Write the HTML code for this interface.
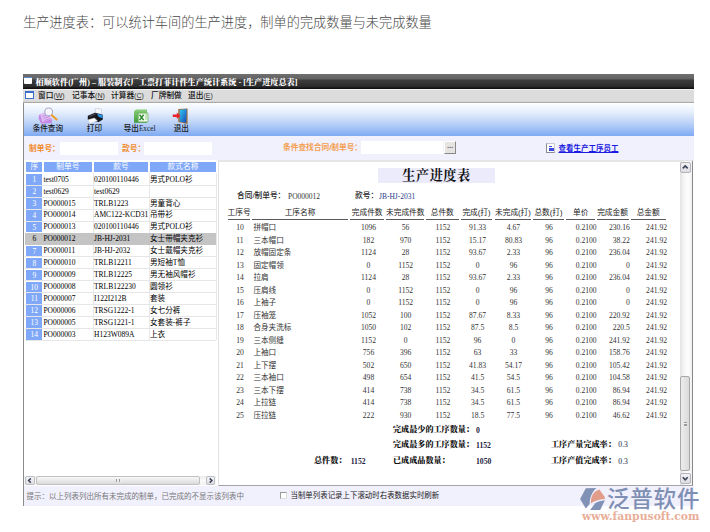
<!DOCTYPE html>
<html><head><meta charset="utf-8"><title>生产进度表</title>
<style>
html,body{margin:0;padding:0;background:#fff;}
body{width:710px;height:532px;position:relative;overflow:hidden;font-family:"Liberation Sans","Noto Sans CJK SC",sans-serif;}
div,span{position:absolute;white-space:nowrap;box-sizing:border-box;}
.h1{left:23px;top:13.7px;font-size:13.2px;line-height:18px;color:#484848;font-weight:300;letter-spacing:0px;text-spacing-trim:space-all;}
.tb{left:23px;top:74px;width:671px;height:15px;background:linear-gradient(#707070 0,#626262 33%,#3e3e3e 40%,#2a2a2a 86%,#111 93%,#111 100%);}
.tbt{letter-spacing:0.04px;left:12.6px;top:0.5px;font-size:8.1px;line-height:15px;color:#fff;font-weight:900;font-family:"Liberation Serif","Noto Serif CJK SC",serif;}
.mb{left:23px;top:89px;width:671px;height:14.5px;background:linear-gradient(#f4f4f4 0,#f4f4f4 1px,#dcdcdc 1.5px,#dcdcdc 11.7px,#eee 12.2px,#aaa 13px,#aaa 13.6px,#fff 14px);}
.mbt{top:0.5px;font-weight:500;font-size:7.7px;line-height:12px;color:#111;}
.mbt i{font-style:normal;font-size:7px;color:#333}
.tool{left:24px;top:103.5px;width:670px;height:32.5px;background:linear-gradient(#fbfdff 0,#e6effc 25%,#c2d6f8 55%,#8fb5f4 90%,#7ea9f2 100%);}
.tl{font-family:"Liberation Serif","Noto Sans CJK SC",serif;font-size:7.6px;line-height:10px;color:#181818;font-weight:500;top:20.5px;text-align:center;width:50px;}
.flt{left:24px;top:135.7px;width:670px;height:25px;background:#f1f0fd;}
.or{color:#f28a28;font-weight:bold;font-size:7.7px;line-height:12px;}
.inp{background:#fff;height:13.2px;}
.lp{left:24px;top:160px;width:192px;height:325px;background:#fff;}
.lh{background:#80a8f8;color:#fff;font-size:7.7px;line-height:11px;text-align:center;height:10.6px;line-height:10.6px;top:161.5px;}
.lr{font-family:"Liberation Serif","Noto Sans CJK SC",serif;font-size:7.5px;line-height:11px;color:#000;height:11px;}
.ln{left:26.3px;width:16px;background:#80a8f8;color:#fff;text-align:center;height:10.4px !important;margin-top:0.7px;line-height:11.6px !important;overflow:hidden;}
.cjk{font-family:"Liberation Serif","Noto Sans CJK SC",sans-serif;font-size:7.6px !important;}
.rp{left:218.3px;top:160.3px;width:474.7px;height:325.4px;background:#fff;border:1px solid #a4a4a4;border-top:2.2px solid #e6e6e6;border-left:1.9px solid #e2e2e2;border-right:1.5px solid #888}
.rh{font-size:7.7px;line-height:10.4px;color:#222;text-align:center;border-bottom:1.4px solid #5a5a5a;height:11.4px;top:208.2px;}
.rc{font-family:"Liberation Serif","Noto Sans CJK SC",serif;font-size:7.6px;line-height:12px;color:#333;height:12px;}
.c{text-align:center;}
.r{text-align:right;}
.sb{font-family:"Liberation Serif","Noto Serif CJK SC",serif;font-weight:900;font-size:8.1px;line-height:12px;color:#111;margin-top:1.2px}
.sbn{font-family:"Liberation Serif",serif;font-weight:bold;font-size:7.7px;line-height:12px;color:#1c1c40;margin-top:1.2px}
.status{left:23px;top:485.5px;width:671px;height:20px;background:#f1f0fd;}
</style></head><body>

<div class="h1">生产进度表：可以统计车间的生产进度，制单的完成数量与未完成数量</div>
<div class="tb"><div style="left:1.2px;top:3.4px;width:8.2px;height:7px;background:#fff;border-top:1.6px solid #5a86d8;border-radius:1px"></div><div class="tbt">栢顺软件(广州) – 服装制衣厂工票打菲计件生产统计系统 - [生产进度总表]</div></div>
<div class="mb"><div style="left:2px;top:2px;width:9px;height:8px;background:#fff;border:1px solid #3a6fd0;border-top-width:2px"></div>
<div class="mbt" style="left:15px">窗口<i>(<u>W</u>)</i></div>
<div class="mbt" style="left:49px">记事本<i>(<u>N</u>)</i></div>
<div class="mbt" style="left:88px">计算器<i>(<u>C</u>)</i></div>
<div class="mbt" style="left:128px">厂牌制做</div>
<div class="mbt" style="left:165px">退出<i>(<u>E</u>)</i></div>
</div>
<div class="tool">
<div class="tl" style="left:-1.2px">条件查询</div>
<div class="tl" style="left:45.4px">打印</div>
<div class="tl" style="left:90.6px">导出<span style="position:static;font-size:7.3px;font-weight:normal;color:#222">Excel</span></div>
<div class="tl" style="left:132.3px">退出</div>
<svg style="position:absolute;left:0;top:0" width="180" height="32.5" viewBox="24 103.5 180 32.5">
<defs>
<linearGradient id="gd" x1="0" y1="0" x2="1" y2="1"><stop offset="0" stop-color="#38c8f0"/><stop offset="1" stop-color="#1048b8"/></linearGradient>
<linearGradient id="gx" x1="0" y1="0" x2="0" y2="1"><stop offset="0" stop-color="#8ccf7a"/><stop offset="1" stop-color="#3f9a3c"/></linearGradient>
</defs>
<g>
<path d="M39 114.5 L47.5 111.5 L52.2 119.5 L51.5 122.8 L41 123 L38.6 118 Z" fill="#c48ae6"/>
<path d="M40.2 113.6 L48 111 L51.6 118.4 L42.4 121.4 Z" fill="#e2bdf4"/>
<path d="M42.5 116 L48.5 114 M43.5 118 L49.5 116 M44.4 120 L50.4 118" stroke="#b27ad8" stroke-width="0.7"/>
<circle cx="48.7" cy="111.4" r="3.9" fill="#f6f6fc" fill-opacity="0.92" stroke="#a8a8c4" stroke-width="1.1"/>
<path d="M51.8 114.8 L56.6 119" stroke="#f09a20" stroke-width="2" stroke-linecap="round"/>
</g>
<g>
<path d="M95.6 107.9 L101.6 108.6 L101.3 113.4 L95 112.6 Z" fill="#f6f8fc" stroke="#b4bcc8" stroke-width="0.5"/>
<path d="M87.8 115.2 L95 112.2 L102.8 114.2 L102.8 119 L98.8 121.6 L87.8 119.2 Z" fill="#17171d"/>
<path d="M96.9 113.3 L102.6 114.6 L102.6 117.7 L98.8 116.5 Z" fill="#2a94e4"/>
<path d="M88.6 115.4 L95 112.9 L96.6 113.6 L90 116.4 Z" fill="#44444e"/>
<path d="M88 119.2 L94.4 117.5 L97.5 120.3 L89.9 122.9 Z" fill="#fbfbfb" stroke="#c4c4cc" stroke-width="0.4"/>
</g>
<g>
<path d="M134 122.2 L134 112 Q134 109 137.5 109 L147 109 L147 122.2 Z" fill="url(#gx)"/>
<rect x="138.2" y="112.6" width="9.8" height="8.8" fill="#f4faef" stroke="#5aa848" stroke-width="0.6"/>
<path d="M139.6 114.2 L143.6 119.6 M143.6 114.2 L139.6 119.6" stroke="#2e8a30" stroke-width="1.5"/>
<path d="M145 114.4 L147.6 114.4 M145 116.4 L147.6 116.4 M145 118.4 L147.6 118.4" stroke="#7fc46e" stroke-width="0.8"/>
</g>
<g>
<path d="M178.2 108.4 L187.6 107.9 L187.6 123.4 L178.2 121.6 Z" fill="#a8703a"/>
<path d="M179.6 109.2 L186.8 108.6 L186.2 122.6 L179.6 121 Z" fill="url(#gd)"/>
<path d="M172.8 113.9 L176.8 113.9 L176.8 112 L180.6 115.2 L176.8 118.4 L176.8 116.5 L172.8 116.5 Z" fill="#e8202c"/>
</g>
</svg>
</div>
<div class="flt">
<div class="or" style="left:5px;top:7.2px">制单号：</div><div class="inp" style="left:36px;top:6.4px;width:58px"></div>
<div class="or" style="left:98px;top:7.2px">款号：</div><div class="inp" style="left:119.6px;top:6.4px;width:68.4px"></div>
<div class="or" style="left:259px;top:6.6px;color:#f4a050">条件查找合同/制单号：</div><div class="inp" style="left:337px;top:5.6px;width:82.2px"></div>
<div style="left:420px;top:5px;width:12px;height:13.5px;background:#e6e4e0;border:1px solid #fff;border-right-color:#888;border-bottom-color:#888;font-size:8px;line-height:8.5px;font-weight:bold;text-align:center;color:#667;letter-spacing:-0.3px">...</div>
<div style="left:522px;top:7.8px;width:9.4px;height:10px;background:#fff;border:1px solid #c8c8d0;border-left:1.5px solid #8a8a90;border-bottom:1.5px solid #8a8a90"></div><div style="left:524.6px;top:10.6px;width:3px;height:1px;background:#3a4ae0"></div><div style="left:524.6px;top:12.6px;width:5px;height:3.2px;background:#3a4ae0"></div>
<div style="left:534.5px;top:7.3px;font-size:7.5px;line-height:12px;color:#1a1ae0;font-weight:bold;text-decoration:underline;text-underline-offset:1px">查看生产工序员工</div>
</div>
<div class="lp"></div>
<div class="lh" style="left:26.3px;width:16.0px">序</div>
<div class="lh" style="left:43.7px;width:48.3px">制单号</div>
<div class="lh" style="left:94.0px;width:54.0px">款号</div>
<div class="lh" style="left:150.0px;width:66.0px">款式名称</div>
<div style="left:92.6px;top:173px;width:1px;height:167px;background:#e8e8e8"></div>
<div style="left:148.8px;top:173px;width:1px;height:167px;background:#e8e8e8"></div>
<div style="left:215.6px;top:173px;width:1px;height:167px;background:#e8e8e8"></div>
<div style="left:25px;top:184.90px;width:191px;height:1px;background:#e6e6e6"></div>
<div class="lr ln" style="top:173.70px">1</div>
<div class="lr" style="left:43.4px;top:173.70px">test0705</div>
<div class="lr" style="left:94px;top:173.70px">020100110446</div>
<div class="lr cjk" style="left:150px;top:173.70px">男式POLO衫</div>
<div style="left:25px;top:196.81px;width:191px;height:1px;background:#e6e6e6"></div>
<div class="lr ln" style="top:185.61px">2</div>
<div class="lr" style="left:43.4px;top:185.61px">test0629</div>
<div class="lr" style="left:94px;top:185.61px">test0629</div>
<div class="lr cjk" style="left:150px;top:185.61px"></div>
<div style="left:25px;top:208.72px;width:191px;height:1px;background:#e6e6e6"></div>
<div class="lr ln" style="top:197.52px">3</div>
<div class="lr" style="left:43.4px;top:197.52px">PO000015</div>
<div class="lr" style="left:94px;top:197.52px">TRLB1223</div>
<div class="lr cjk" style="left:150px;top:197.52px">男童背心</div>
<div style="left:25px;top:220.63px;width:191px;height:1px;background:#e6e6e6"></div>
<div class="lr ln" style="top:209.43px">4</div>
<div class="lr" style="left:43.4px;top:209.43px">PO000014</div>
<div class="lr" style="left:94px;top:209.43px">AMC122-KCD31</div>
<div class="lr cjk" style="left:150px;top:209.43px">吊带衫</div>
<div style="left:25px;top:232.54px;width:191px;height:1px;background:#e6e6e6"></div>
<div class="lr ln" style="top:221.34px">5</div>
<div class="lr" style="left:43.4px;top:221.34px">PO000013</div>
<div class="lr" style="left:94px;top:221.34px">020100110446</div>
<div class="lr cjk" style="left:150px;top:221.34px">男式POLO衫</div>
<div style="left:25px;top:233.25px;width:191px;height:11.4px;background:#c4c4c4"></div>
<div class="lr c" style="left:26.3px;width:16px;top:233.25px">6</div>
<div class="lr" style="left:43.4px;top:233.25px">PO000012</div>
<div class="lr" style="left:94px;top:233.25px">JB-HJ-2031</div>
<div class="lr cjk" style="left:150px;top:233.25px">女士带帽夹克衫</div>
<div style="left:25px;top:256.36px;width:191px;height:1px;background:#e6e6e6"></div>
<div class="lr ln" style="top:245.16px">7</div>
<div class="lr" style="left:43.4px;top:245.16px">PO000011</div>
<div class="lr" style="left:94px;top:245.16px">JB-HJ-2032</div>
<div class="lr cjk" style="left:150px;top:245.16px">女士戴帽夹克衫</div>
<div style="left:25px;top:268.27px;width:191px;height:1px;background:#e6e6e6"></div>
<div class="lr ln" style="top:257.07px">8</div>
<div class="lr" style="left:43.4px;top:257.07px">PO000010</div>
<div class="lr" style="left:94px;top:257.07px">TRLB12211</div>
<div class="lr cjk" style="left:150px;top:257.07px">男短袖T恤</div>
<div style="left:25px;top:280.18px;width:191px;height:1px;background:#e6e6e6"></div>
<div class="lr ln" style="top:268.98px">9</div>
<div class="lr" style="left:43.4px;top:268.98px">PO000009</div>
<div class="lr" style="left:94px;top:268.98px">TRLB12225</div>
<div class="lr cjk" style="left:150px;top:268.98px">男无袖风帽衫</div>
<div style="left:25px;top:292.09px;width:191px;height:1px;background:#e6e6e6"></div>
<div class="lr ln" style="top:280.89px">10</div>
<div class="lr" style="left:43.4px;top:280.89px">PO000008</div>
<div class="lr" style="left:94px;top:280.89px">TRLB122230</div>
<div class="lr cjk" style="left:150px;top:280.89px">圆领衫</div>
<div style="left:25px;top:304.00px;width:191px;height:1px;background:#e6e6e6"></div>
<div class="lr ln" style="top:292.80px">11</div>
<div class="lr" style="left:43.4px;top:292.80px">PO000007</div>
<div class="lr" style="left:94px;top:292.80px">I122I212B</div>
<div class="lr cjk" style="left:150px;top:292.80px">套装</div>
<div style="left:25px;top:315.91px;width:191px;height:1px;background:#e6e6e6"></div>
<div class="lr ln" style="top:304.71px">12</div>
<div class="lr" style="left:43.4px;top:304.71px">PO000006</div>
<div class="lr" style="left:94px;top:304.71px">TRSG1222-1</div>
<div class="lr cjk" style="left:150px;top:304.71px">女七分裤</div>
<div style="left:25px;top:327.82px;width:191px;height:1px;background:#e6e6e6"></div>
<div class="lr ln" style="top:316.62px">13</div>
<div class="lr" style="left:43.4px;top:316.62px">PO000005</div>
<div class="lr" style="left:94px;top:316.62px">TRSG1221-1</div>
<div class="lr cjk" style="left:150px;top:316.62px">女套装-裤子</div>
<div style="left:25px;top:339.73px;width:191px;height:1px;background:#e6e6e6"></div>
<div class="lr ln" style="top:328.53px">14</div>
<div class="lr" style="left:43.4px;top:328.53px">PO000003</div>
<div class="lr" style="left:94px;top:328.53px">H123W089A</div>
<div class="lr cjk" style="left:150px;top:328.53px">上衣</div>
<div style="left:24px;top:475.8px;width:192px;height:9.7px;background:linear-gradient(#ececec,#fafafa 50%,#f2f2f2)"></div>
<div style="left:25.4px;top:476.2px;width:9.6px;height:9px;background:linear-gradient(#f6f6f8,#dedee2);border:1px solid #bcbcc4;border-radius:2px"></div>
<svg style="position:absolute;left:25.4px;top:476.2px" width="9.6" height="9" viewBox="0 0 9.6 9"><path d="M5.8 2.4 L3.6 4.5 L5.8 6.6" fill="none" stroke="#3a4458" stroke-width="1.5"/></svg>
<div style="left:36px;top:476.2px;width:164px;height:9px;background:linear-gradient(#f8f8f8,#dadada);border:1px solid #c0c0c0;border-radius:2px"></div>
<div style="left:115.5px;top:479px;width:5px;height:3.4px;background:repeating-linear-gradient(90deg,#999 0,#999 0.8px,#eee 0.8px,#eee 1.7px)"></div>
<div style="left:206px;top:476.2px;width:9.4px;height:9px;background:linear-gradient(#f6f6f8,#dedee2);border:1px solid #bcbcc4;border-radius:2px"></div>
<svg style="position:absolute;left:206px;top:476.2px" width="9.4" height="9" viewBox="0 0 9.4 9"><path d="M3.7 2.4 L5.9 4.5 L3.7 6.6" fill="none" stroke="#3a4458" stroke-width="1.5"/></svg>
<div class="rp"></div>
<div style="left:378px;top:168px;width:116.6px;height:14.8px;background:#ebebfb"></div>
<div style="left:378.5px;top:167.2px;width:116px;height:18px;text-align:center;font-family:'Liberation Serif','Noto Serif CJK SC',serif;font-weight:700;font-size:13.1px;line-height:18px;color:#111;letter-spacing:0.6px">生产进度表</div>
<div style="left:237px;top:189.8px;font-size:7.7px;line-height:12px;color:#222;font-weight:500">合同/制单号：</div>
<div style="left:288px;top:190.8px;font-size:7.5px;line-height:12px;color:#333;font-family:'Liberation Serif',serif">PO000012</div>
<div style="left:355px;top:189.8px;font-size:7.7px;line-height:12px;color:#222;font-weight:500">款号：</div>
<div style="left:379px;top:190.8px;font-size:7.5px;line-height:12px;color:#2a3a8a;font-family:'Liberation Serif',serif">JB-HJ-2031</div>
<div class="rh" style="left:227.6px;width:22.8px">工序号</div>
<div class="rh" style="left:251.7px;width:96.7px">工序名称</div>
<div class="rh" style="left:350.4px;width:33.6px">完成件数</div>
<div class="rh" style="left:386.0px;width:37.6px">未完成件数</div>
<div class="rh" style="left:425.7px;width:33.1px">总件数</div>
<div class="rh" style="left:461.0px;width:31.0px">完成(打)</div>
<div class="rh" style="left:495.0px;width:35.5px">未完成(打)</div>
<div class="rh" style="left:532.6px;width:31.8px">总数(打)</div>
<div class="rh" style="left:566.4px;width:28.6px">单价</div>
<div class="rh" style="left:596.5px;width:32.1px">完成金额</div>
<div class="rh" style="left:630.6px;width:35.2px">总金额</div>
<div class="rc c" style="left:228.6px;width:22.8px;top:222.00px">10</div>
<div class="rc cjk" style="left:253.4px;top:222.00px">拼帽口</div>
<div class="rc c" style="left:351.7px;width:33.6px;top:222.00px">1096</div>
<div class="rc c" style="left:386.8px;width:37.6px;top:222.00px">56</div>
<div class="rc c" style="left:426.3px;width:33.1px;top:222.00px">1152</div>
<div class="rc c" style="left:462.1px;width:31.0px;top:222.00px">91.33</div>
<div class="rc c" style="left:495.7px;width:35.5px;top:222.00px">4.67</div>
<div class="rc c" style="left:533.2px;width:31.8px;top:222.00px">96</div>
<div class="rc r" style="left:567.0px;width:29.6px;top:222.00px">0.2100</div>
<div class="rc r" style="left:596.7px;width:33.1px;top:222.00px">230.16</div>
<div class="rc r" style="left:630.8px;width:36.2px;top:222.00px">241.92</div>
<div class="rc c" style="left:228.6px;width:22.8px;top:234.51px">11</div>
<div class="rc cjk" style="left:253.4px;top:234.51px">三本帽口</div>
<div class="rc c" style="left:351.7px;width:33.6px;top:234.51px">182</div>
<div class="rc c" style="left:386.8px;width:37.6px;top:234.51px">970</div>
<div class="rc c" style="left:426.3px;width:33.1px;top:234.51px">1152</div>
<div class="rc c" style="left:462.1px;width:31.0px;top:234.51px">15.17</div>
<div class="rc c" style="left:495.7px;width:35.5px;top:234.51px">80.83</div>
<div class="rc c" style="left:533.2px;width:31.8px;top:234.51px">96</div>
<div class="rc r" style="left:567.0px;width:29.6px;top:234.51px">0.2100</div>
<div class="rc r" style="left:596.7px;width:33.1px;top:234.51px">38.22</div>
<div class="rc r" style="left:630.8px;width:36.2px;top:234.51px">241.92</div>
<div class="rc c" style="left:228.6px;width:22.8px;top:247.02px">12</div>
<div class="rc cjk" style="left:253.4px;top:247.02px">放帽固定条</div>
<div class="rc c" style="left:351.7px;width:33.6px;top:247.02px">1124</div>
<div class="rc c" style="left:386.8px;width:37.6px;top:247.02px">28</div>
<div class="rc c" style="left:426.3px;width:33.1px;top:247.02px">1152</div>
<div class="rc c" style="left:462.1px;width:31.0px;top:247.02px">93.67</div>
<div class="rc c" style="left:495.7px;width:35.5px;top:247.02px">2.33</div>
<div class="rc c" style="left:533.2px;width:31.8px;top:247.02px">96</div>
<div class="rc r" style="left:567.0px;width:29.6px;top:247.02px">0.2100</div>
<div class="rc r" style="left:596.7px;width:33.1px;top:247.02px">236.04</div>
<div class="rc r" style="left:630.8px;width:36.2px;top:247.02px">241.92</div>
<div class="rc c" style="left:228.6px;width:22.8px;top:259.53px">13</div>
<div class="rc cjk" style="left:253.4px;top:259.53px">固定帽领</div>
<div class="rc c" style="left:351.7px;width:33.6px;top:259.53px">0</div>
<div class="rc c" style="left:386.8px;width:37.6px;top:259.53px">1152</div>
<div class="rc c" style="left:426.3px;width:33.1px;top:259.53px">1152</div>
<div class="rc c" style="left:462.1px;width:31.0px;top:259.53px">0</div>
<div class="rc c" style="left:495.7px;width:35.5px;top:259.53px">96</div>
<div class="rc c" style="left:533.2px;width:31.8px;top:259.53px">96</div>
<div class="rc r" style="left:567.0px;width:29.6px;top:259.53px">0.2100</div>
<div class="rc r" style="left:596.7px;width:33.1px;top:259.53px">0</div>
<div class="rc r" style="left:630.8px;width:36.2px;top:259.53px">241.92</div>
<div class="rc c" style="left:228.6px;width:22.8px;top:272.04px">14</div>
<div class="rc cjk" style="left:253.4px;top:272.04px">拉肩</div>
<div class="rc c" style="left:351.7px;width:33.6px;top:272.04px">1124</div>
<div class="rc c" style="left:386.8px;width:37.6px;top:272.04px">28</div>
<div class="rc c" style="left:426.3px;width:33.1px;top:272.04px">1152</div>
<div class="rc c" style="left:462.1px;width:31.0px;top:272.04px">93.67</div>
<div class="rc c" style="left:495.7px;width:35.5px;top:272.04px">2.33</div>
<div class="rc c" style="left:533.2px;width:31.8px;top:272.04px">96</div>
<div class="rc r" style="left:567.0px;width:29.6px;top:272.04px">0.2100</div>
<div class="rc r" style="left:596.7px;width:33.1px;top:272.04px">236.04</div>
<div class="rc r" style="left:630.8px;width:36.2px;top:272.04px">241.92</div>
<div class="rc c" style="left:228.6px;width:22.8px;top:284.55px">15</div>
<div class="rc cjk" style="left:253.4px;top:284.55px">压肩线</div>
<div class="rc c" style="left:351.7px;width:33.6px;top:284.55px">0</div>
<div class="rc c" style="left:386.8px;width:37.6px;top:284.55px">1152</div>
<div class="rc c" style="left:426.3px;width:33.1px;top:284.55px">1152</div>
<div class="rc c" style="left:462.1px;width:31.0px;top:284.55px">0</div>
<div class="rc c" style="left:495.7px;width:35.5px;top:284.55px">96</div>
<div class="rc c" style="left:533.2px;width:31.8px;top:284.55px">96</div>
<div class="rc r" style="left:567.0px;width:29.6px;top:284.55px">0.2100</div>
<div class="rc r" style="left:596.7px;width:33.1px;top:284.55px">0</div>
<div class="rc r" style="left:630.8px;width:36.2px;top:284.55px">241.92</div>
<div class="rc c" style="left:228.6px;width:22.8px;top:297.06px">16</div>
<div class="rc cjk" style="left:253.4px;top:297.06px">上袖子</div>
<div class="rc c" style="left:351.7px;width:33.6px;top:297.06px">0</div>
<div class="rc c" style="left:386.8px;width:37.6px;top:297.06px">1152</div>
<div class="rc c" style="left:426.3px;width:33.1px;top:297.06px">1152</div>
<div class="rc c" style="left:462.1px;width:31.0px;top:297.06px">0</div>
<div class="rc c" style="left:495.7px;width:35.5px;top:297.06px">96</div>
<div class="rc c" style="left:533.2px;width:31.8px;top:297.06px">96</div>
<div class="rc r" style="left:567.0px;width:29.6px;top:297.06px">0.2100</div>
<div class="rc r" style="left:596.7px;width:33.1px;top:297.06px">0</div>
<div class="rc r" style="left:630.8px;width:36.2px;top:297.06px">241.92</div>
<div class="rc c" style="left:228.6px;width:22.8px;top:309.57px">17</div>
<div class="rc cjk" style="left:253.4px;top:309.57px">压袖笼</div>
<div class="rc c" style="left:351.7px;width:33.6px;top:309.57px">1052</div>
<div class="rc c" style="left:386.8px;width:37.6px;top:309.57px">100</div>
<div class="rc c" style="left:426.3px;width:33.1px;top:309.57px">1152</div>
<div class="rc c" style="left:462.1px;width:31.0px;top:309.57px">87.67</div>
<div class="rc c" style="left:495.7px;width:35.5px;top:309.57px">8.33</div>
<div class="rc c" style="left:533.2px;width:31.8px;top:309.57px">96</div>
<div class="rc r" style="left:567.0px;width:29.6px;top:309.57px">0.2100</div>
<div class="rc r" style="left:596.7px;width:33.1px;top:309.57px">220.92</div>
<div class="rc r" style="left:630.8px;width:36.2px;top:309.57px">241.92</div>
<div class="rc c" style="left:228.6px;width:22.8px;top:322.08px">18</div>
<div class="rc cjk" style="left:253.4px;top:322.08px">合身夹洗标</div>
<div class="rc c" style="left:351.7px;width:33.6px;top:322.08px">1050</div>
<div class="rc c" style="left:386.8px;width:37.6px;top:322.08px">102</div>
<div class="rc c" style="left:426.3px;width:33.1px;top:322.08px">1152</div>
<div class="rc c" style="left:462.1px;width:31.0px;top:322.08px">87.5</div>
<div class="rc c" style="left:495.7px;width:35.5px;top:322.08px">8.5</div>
<div class="rc c" style="left:533.2px;width:31.8px;top:322.08px">96</div>
<div class="rc r" style="left:567.0px;width:29.6px;top:322.08px">0.2100</div>
<div class="rc r" style="left:596.7px;width:33.1px;top:322.08px">220.5</div>
<div class="rc r" style="left:630.8px;width:36.2px;top:322.08px">241.92</div>
<div class="rc c" style="left:228.6px;width:22.8px;top:334.59px">19</div>
<div class="rc cjk" style="left:253.4px;top:334.59px">三本侧缝</div>
<div class="rc c" style="left:351.7px;width:33.6px;top:334.59px">1152</div>
<div class="rc c" style="left:386.8px;width:37.6px;top:334.59px">0</div>
<div class="rc c" style="left:426.3px;width:33.1px;top:334.59px">1152</div>
<div class="rc c" style="left:462.1px;width:31.0px;top:334.59px">96</div>
<div class="rc c" style="left:495.7px;width:35.5px;top:334.59px">0</div>
<div class="rc c" style="left:533.2px;width:31.8px;top:334.59px">96</div>
<div class="rc r" style="left:567.0px;width:29.6px;top:334.59px">0.2100</div>
<div class="rc r" style="left:596.7px;width:33.1px;top:334.59px">241.92</div>
<div class="rc r" style="left:630.8px;width:36.2px;top:334.59px">241.92</div>
<div class="rc c" style="left:228.6px;width:22.8px;top:347.10px">20</div>
<div class="rc cjk" style="left:253.4px;top:347.10px">上袖口</div>
<div class="rc c" style="left:351.7px;width:33.6px;top:347.10px">756</div>
<div class="rc c" style="left:386.8px;width:37.6px;top:347.10px">396</div>
<div class="rc c" style="left:426.3px;width:33.1px;top:347.10px">1152</div>
<div class="rc c" style="left:462.1px;width:31.0px;top:347.10px">63</div>
<div class="rc c" style="left:495.7px;width:35.5px;top:347.10px">33</div>
<div class="rc c" style="left:533.2px;width:31.8px;top:347.10px">96</div>
<div class="rc r" style="left:567.0px;width:29.6px;top:347.10px">0.2100</div>
<div class="rc r" style="left:596.7px;width:33.1px;top:347.10px">158.76</div>
<div class="rc r" style="left:630.8px;width:36.2px;top:347.10px">241.92</div>
<div class="rc c" style="left:228.6px;width:22.8px;top:359.61px">21</div>
<div class="rc cjk" style="left:253.4px;top:359.61px">上下摆</div>
<div class="rc c" style="left:351.7px;width:33.6px;top:359.61px">502</div>
<div class="rc c" style="left:386.8px;width:37.6px;top:359.61px">650</div>
<div class="rc c" style="left:426.3px;width:33.1px;top:359.61px">1152</div>
<div class="rc c" style="left:462.1px;width:31.0px;top:359.61px">41.83</div>
<div class="rc c" style="left:495.7px;width:35.5px;top:359.61px">54.17</div>
<div class="rc c" style="left:533.2px;width:31.8px;top:359.61px">96</div>
<div class="rc r" style="left:567.0px;width:29.6px;top:359.61px">0.2100</div>
<div class="rc r" style="left:596.7px;width:33.1px;top:359.61px">105.42</div>
<div class="rc r" style="left:630.8px;width:36.2px;top:359.61px">241.92</div>
<div class="rc c" style="left:228.6px;width:22.8px;top:372.12px">22</div>
<div class="rc cjk" style="left:253.4px;top:372.12px">三本袖口</div>
<div class="rc c" style="left:351.7px;width:33.6px;top:372.12px">498</div>
<div class="rc c" style="left:386.8px;width:37.6px;top:372.12px">654</div>
<div class="rc c" style="left:426.3px;width:33.1px;top:372.12px">1152</div>
<div class="rc c" style="left:462.1px;width:31.0px;top:372.12px">41.5</div>
<div class="rc c" style="left:495.7px;width:35.5px;top:372.12px">54.5</div>
<div class="rc c" style="left:533.2px;width:31.8px;top:372.12px">96</div>
<div class="rc r" style="left:567.0px;width:29.6px;top:372.12px">0.2100</div>
<div class="rc r" style="left:596.7px;width:33.1px;top:372.12px">104.58</div>
<div class="rc r" style="left:630.8px;width:36.2px;top:372.12px">241.92</div>
<div class="rc c" style="left:228.6px;width:22.8px;top:384.63px">23</div>
<div class="rc cjk" style="left:253.4px;top:384.63px">三本下摆</div>
<div class="rc c" style="left:351.7px;width:33.6px;top:384.63px">414</div>
<div class="rc c" style="left:386.8px;width:37.6px;top:384.63px">738</div>
<div class="rc c" style="left:426.3px;width:33.1px;top:384.63px">1152</div>
<div class="rc c" style="left:462.1px;width:31.0px;top:384.63px">34.5</div>
<div class="rc c" style="left:495.7px;width:35.5px;top:384.63px">61.5</div>
<div class="rc c" style="left:533.2px;width:31.8px;top:384.63px">96</div>
<div class="rc r" style="left:567.0px;width:29.6px;top:384.63px">0.2100</div>
<div class="rc r" style="left:596.7px;width:33.1px;top:384.63px">86.94</div>
<div class="rc r" style="left:630.8px;width:36.2px;top:384.63px">241.92</div>
<div class="rc c" style="left:228.6px;width:22.8px;top:397.14px">24</div>
<div class="rc cjk" style="left:253.4px;top:397.14px">上拉链</div>
<div class="rc c" style="left:351.7px;width:33.6px;top:397.14px">414</div>
<div class="rc c" style="left:386.8px;width:37.6px;top:397.14px">738</div>
<div class="rc c" style="left:426.3px;width:33.1px;top:397.14px">1152</div>
<div class="rc c" style="left:462.1px;width:31.0px;top:397.14px">34.5</div>
<div class="rc c" style="left:495.7px;width:35.5px;top:397.14px">61.5</div>
<div class="rc c" style="left:533.2px;width:31.8px;top:397.14px">96</div>
<div class="rc r" style="left:567.0px;width:29.6px;top:397.14px">0.2100</div>
<div class="rc r" style="left:596.7px;width:33.1px;top:397.14px">86.94</div>
<div class="rc r" style="left:630.8px;width:36.2px;top:397.14px">241.92</div>
<div class="rc c" style="left:228.6px;width:22.8px;top:409.65px">25</div>
<div class="rc cjk" style="left:253.4px;top:409.65px">压拉链</div>
<div class="rc c" style="left:351.7px;width:33.6px;top:409.65px">222</div>
<div class="rc c" style="left:386.8px;width:37.6px;top:409.65px">930</div>
<div class="rc c" style="left:426.3px;width:33.1px;top:409.65px">1152</div>
<div class="rc c" style="left:462.1px;width:31.0px;top:409.65px">18.5</div>
<div class="rc c" style="left:495.7px;width:35.5px;top:409.65px">77.5</div>
<div class="rc c" style="left:533.2px;width:31.8px;top:409.65px">96</div>
<div class="rc r" style="left:567.0px;width:29.6px;top:409.65px">0.2100</div>
<div class="rc r" style="left:596.7px;width:33.1px;top:409.65px">46.62</div>
<div class="rc r" style="left:630.8px;width:36.2px;top:409.65px">241.92</div>
<div class="sb" style="left:393px;top:423px">完成最少的工序数量：</div><div class="sbn" style="left:476px;top:424px">0</div>
<div class="sb" style="left:393px;top:438px">完成最多的工序数量：</div><div class="sbn" style="left:476px;top:439px">1152</div>
<div class="sb" style="left:314px;top:454px">总件数：</div><div class="sbn" style="left:350.7px;top:455px">1152</div>
<div class="sb" style="left:393px;top:454px">已成成品数量：</div><div class="sbn" style="left:476px;top:455px">1050</div>
<div class="sb" style="left:551px;top:438px">工序产量完成率：</div><div class="sbn" style="left:618.3px;top:438px;font-weight:normal">0.3</div>
<div class="sb" style="left:551px;top:454px">工序产值完成率：</div><div class="sbn" style="left:618.3px;top:455.3px;font-weight:normal">0.3</div>
<div style="left:679.5px;top:161px;width:12px;height:324px;background:linear-gradient(90deg,#e4e4e4,#f8f8f8 40%,#fdfdfd 70%,#f0f0f0)"></div>
<div style="left:680px;top:162.3px;width:10.5px;height:10.4px;background:linear-gradient(#f2f2f4,#dcdce2);border:1px solid #b4b4bc;border-radius:2px"></div>
<svg style="position:absolute;left:680px;top:162.3px" width="10.5" height="10.4" viewBox="0 0 10.5 10.4"><path d="M2.8 6.4 L5.25 3.9 L7.7 6.4" fill="none" stroke="#3a4458" stroke-width="1.6"/></svg>
<div style="left:680.2px;top:376px;width:10px;height:95.2px;background:linear-gradient(90deg,#ececec,#dadada);border:1px solid #a8a8a8;border-radius:2px"></div>
<div style="left:683.5px;top:421.5px;width:3.5px;height:5px;background:repeating-linear-gradient(#999 0,#999 0.8px,#eee 0.8px,#eee 1.7px)"></div>
<div style="left:680px;top:472.5px;width:10.5px;height:11px;background:linear-gradient(#f2f2f4,#dcdce2);border:1px solid #b4b4bc;border-radius:2px"></div>
<svg style="position:absolute;left:680px;top:472.5px" width="10.5" height="11" viewBox="0 0 10.5 11"><path d="M2.8 4.3 L5.25 6.8 L7.7 4.3" fill="none" stroke="#3a4458" stroke-width="1.6"/></svg>
<div class="status"><div style="left:3.5px;top:5.5px;font-size:7.5px;line-height:11px;color:#777">提示：以上列表列出所有未完成的制单，已完成的不显示该列表中</div>
<div style="left:256.7px;top:6.5px;width:7px;height:7px;background:#fff;border:1px solid #999;border-right-color:#ddd;border-bottom-color:#ddd"></div>
<div style="left:267.5px;top:4.7px;font-size:7.45px;line-height:11px;color:#222">当制单列表记录上下滚动时右表数据实时刷新</div></div>
<div style="left:23px;top:103px;width:1.2px;height:402.5px;background:#8c8c8c"></div>
<svg style="position:absolute;left:570px;top:480px" width="140" height="52" viewBox="570 480 140 52">
<path d="M585.8 488.3 L596.4 488.1 C592 492 589.5 498 589.7 504 L585.8 508.4 L580.1 498.9 Z" fill="#8292b6"/>
<path d="M590.9 503.6 C590.5 496 594 491 599.4 489.6 L604.9 497.2 L604.9 499 C599 499.5 594 501 590.9 503.6 Z" fill="#e29c8a"/>
<path d="M595.2 503.2 C598 501.5 601 500.6 604.9 500.2 L600.2 509.9 L590.1 509.9 Z" fill="#8292b6"/>
<text x="607" y="507.3" font-family="'Liberation Sans','Noto Sans CJK SC',sans-serif" font-weight="500" font-size="22.6" fill="#7f8fb4" textLength="92.5" lengthAdjust="spacing">泛普软件</text>
<text x="582" y="520.1" font-family="'DejaVu Serif','Liberation Serif',serif" font-weight="bold" font-size="10.6" fill="#e8ae98" textLength="117.5" lengthAdjust="spacingAndGlyphs">www.fanpusoft.com</text>
</svg>
</body></html>
